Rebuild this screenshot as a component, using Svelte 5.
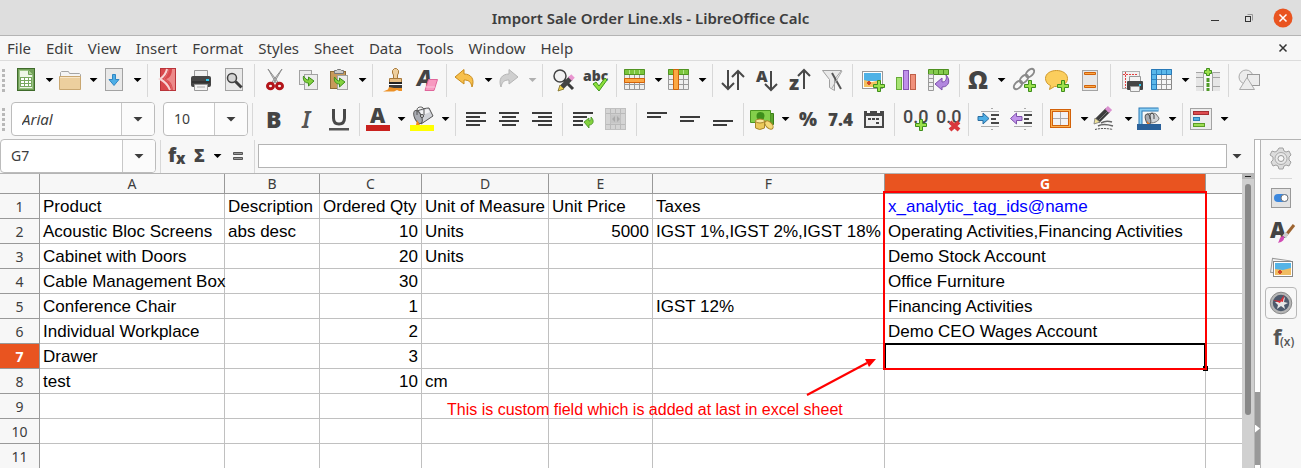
<script>
  const menus = ['File', 'Edit', 'View', 'Insert', 'Format', 'Styles', 'Sheet', 'Data', 'Tools', 'Window', 'Help'];

  const plus = (x, y) =>
    `<path d="M${x + 4} ${y}h3v4h4v3h-4v4h-3v-4h-4v-3h4z" transform="translate(-.5 .5)" fill="#9be04b" stroke="#3f8f1c"/>`;
  const bars = (rows) =>
    rows.map(([x, y, w]) => `<rect x="${x}" y="${y}" width="${w}" height="2" fill="#3b3b3b"/>`).join('');
  const glyph = (t, x, y, size, extra = '') =>
    `<text x="${x}" y="${y}" font-family="Open Sans, Noto Sans, sans-serif" font-weight="800" font-size="${size}" fill="#444" ${extra}>${t}</text>`;
  const zeros = '<text x="1" y="16" font-family="Roboto, sans-serif" font-weight="500" font-size="18" fill="#484848">0.0</text>';
  const gridLines = '<path d="M.5 6.500h20M.5 11.500h20M.5 16.500h20M5.500 1v20M10.500 1v20M15.500 1v20" stroke="#999" fill="none"/>';
  const page = (x, y, w, h) =>
    `<rect x="${x}.5" y="${y}.5" width="${w}" height="${h}" fill="#ececec" stroke="#a2a2a2"/>`;

  const icons = {
    sheet: `<rect x="2.500" y=".5" width="17" height="22" fill="#71a057" stroke="#3f6b2b"/><path d="M4.500 2.500h9l4 4v14h-13z" fill="#eef6e8" stroke="#9cc487"/><path d="M13.500 2.500v4h4" fill="#a9d18e" stroke="#6f9f58"/><path d="M5 9h12v10H5z" fill="#78a85f"/><path d="M6 10h3v2H6zM10 10h3v2h-3zM14 10h2v2h-2zM6 13h3v2H6zM10 13h3v2h-3zM14 13h2v2h-2zM6 16h3v2H6zM10 16h3v2h-3zM14 16h2v2h-2z" fill="#fff"/>`,
    folder: `<path d="M1.500 9V4.500l1-1h7l1 2h10l1 1V10" fill="#f4f4f4" stroke="#a5a5a5"/><path d="M.5 8.500h21v13H.5z" fill="#eccf9e" stroke="#c9a771"/><path d="M1 9.500h20" stroke="#f8e6c8"/>`,
    save: `<rect x="2.500" y=".5" width="17" height="22" fill="#e9e9e9" stroke="#a3a3a3"/><path d="M9.500 6.500h3v5h3.500l-5 6-5-6h3.500z" fill="#4daee6" stroke="#2f86c4"/>`,
    pdf: `<rect x="5.500" y=".5" width="15" height="22" fill="#d9484c" stroke="#b9343a"/><path d="M12 1C11 6 8 9 5 11c4 2 8 6 10 11" fill="none" stroke="#f7d4d4" stroke-width="2"/><path d="M14 1c-1 4-3 8-5 10 4 2 7 4 8 11" fill="none" stroke="#e06a6c"/><path d="M17 1h3v21h-2c-1-8-4-9-7-11 4-1 6-5 6-10z" fill="#ec8a8a"/>`,
    print: `<path d="M6.500 9V2.500h13V9" fill="#f0f0f0" stroke="#999"/><rect x="3" y="8" width="20" height="11" rx="2" fill="#454545"/><path d="M4 14h18" stroke="#222"/><rect x="18" y="11" width="3" height="2" fill="#27c9f2"/><path d="M6.500 16.500h13v6h-13z" fill="#f3f3f3" stroke="#999"/><path d="M9 19h8" stroke="#aaa"/>`,
    preview: `<rect x="4.500" y=".5" width="17" height="22" fill="#e9e9e9" stroke="#a3a3a3"/><circle cx="11" cy="10" r="4.500" fill="#d5d5d5" stroke="#444" stroke-width="1.500"/><path d="M14.500 13.500l6 6" stroke="#3d3d3d" stroke-width="3"/>`,
    cut: `<path d="M6 1l8 14 2-1z M20 1l-8 14-2-1z" fill="#dedede" stroke="#909090"/><g fill="none" stroke="#b3151a" stroke-width="3"><ellipse cx="8.500" cy="18" rx="3" ry="2.800"/><ellipse cx="17.500" cy="18" rx="3" ry="2.800"/></g>`,
    copy: `${page(4, 2, 12, 14)}${page(9, 6, 13, 15)}<path d="M8.500 8c-1 5 2 7 5 7v3l5.500-5-5.500-4v3c-2 0-3-1-5-4z" fill="#83d13f" stroke="#3f8f1c"/>`,
    paste: `<rect x="2.500" y="3.500" width="15" height="17" fill="#c89a5b" stroke="#8c6b38"/><path d="M6.500 5.500v-3h2l1-1h3l1 1h2v3z" fill="#ccc" stroke="#777"/>${page(9, 7, 10, 14)}<path d="M6.500 9c-1 5 2 7 5 7v3l5.500-5-5.500-4v3c-2 0-3-1-5-4z" fill="#83d13f" stroke="#3f8f1c"/>`,
    brush: `<path d="M13.500 11V7l-1-2V2.500l2-2h2l2 2V5l-1 2v4" fill="#efcf9d" stroke="#a87a3c"/><path d="M9.500 10.500h12v4h-12z" fill="#e8bf85" stroke="#a87a3c"/><path d="M9 14h13v2H9z" fill="#222"/><path d="M9 16h13v1H9z" fill="#fff"/><path d="M9 17h13v3H9z" fill="#3b3b3b"/><path d="M9 19l5 1h8v3h-3l-2-1-3 1.500H3l5-2z" fill="#ed9126"/>`,
    clear: `${glyph('A', 4, 18, 22, 'font-style="italic"')}<path d="M15.500 11.500h9l-3.500 11h-9z" fill="#f79ac0" stroke="#e0669b"/><path d="M13 19h9" stroke="#fbc5dc"/>`,
    undo: `<path d="M1 9L10 1.500V6c7 0 11 5 8 13-1-5-3-7-8-7v4z" fill="#f7c04d" stroke="#c98b1b"/>`,
    redo: `<path d="M20 9L11 1.500V6C4 6 0 11 3 19c1-5 3-7 8-7v4z" fill="#cfcfcf" stroke="#b5b5b5"/>`,
    find: `<circle cx="10" cy="8" r="6" fill="#f2f2f2" stroke="#444" stroke-width="1.500"/><path d="M14 12l9 9" stroke="#3b3b3b" stroke-width="3"/><path d="M12 19l9-9" stroke="#444" stroke-width="5"/><path d="M20 11l3-3" stroke="#e995d0" stroke-width="5"/><path d="M8 23l2-6 4 4z" fill="#edd04c" stroke="#7a6b28" stroke-width=".8"/>`,
    abc: `${glyph('abc', 0, 13, 14)}<path d="M10 16l3-2 3 4 6-8 2 2-8 11z" fill="#8ee03c" stroke="#3f981d"/>`,
    rows: `<path d="M.5 1.500h20v20H.5z" fill="#efefef" stroke="#999"/>${gridLines}<path d="M.5 1.500h20v5H.5z" fill="#7cc53e" stroke="#519422"/><path d="M5.500 2v4M10.500 2v4M15.500 2v4" stroke="#b4e58c"/><path d="M.5 10.500h20v4H.5z" fill="#fba845" stroke="#d2620a"/>`,
    cols: `<path d="M.5 1.500h20v20H.5z" fill="#efefef" stroke="#999"/>${gridLines}<path d="M.5 1.500h20v5H.5z" fill="#7cc53e" stroke="#519422"/><path d="M5.500 2v4M15.500 2v4" stroke="#b4e58c"/><path d="M5.500 1.500h5v20h-5z" fill="#fba845" stroke="#d2620a"/>`,
    sort: `<path d="M8 2v19M2 15l6 6 6-6M18 22V3M12 9l6-6 6 6" fill="none" stroke="#484848" stroke-width="2"/>`,
    asc: `${glyph('A', 3, 14, 16)}<path d="M18 3v19M12 16l6 6 6-6" fill="none" stroke="#484848" stroke-width="2"/>`,
    desc: `${glyph('z', 3, 22, 20)}<path d="M18 21V2M12 8l6-6 6 6" fill="none" stroke="#484848" stroke-width="2"/>`,
    filter: `<path d="M3.500 2.500h19l-7 9v11l-5-3v-8z" fill="#e9e9e9" stroke="#a0a0a0"/><path d="M13 5l9 16" stroke="#555" stroke-width="2"/><path d="M23 3L13 20" stroke="#aaa"/>`,
    image: `<rect x="2.500" y="3.500" width="20" height="17" fill="#fff" stroke="#999"/><path d="M4 5h17v8H4z" fill="#4fb2e6"/><path d="M4 12l8 2 9-2v7H4z" fill="#f4c160"/><path d="M7 15h4M9 13v4" stroke="#d24726" stroke-width="2"/>${plus(14, 12)}`,
    chart: `<rect x="3.500" y="9.500" width="5" height="12" fill="#a6e372" stroke="#67ac37"/><rect x="10.500" y="2.500" width="5" height="19" fill="#bf90ea" stroke="#8555b3"/><rect x="17.500" y="6.500" width="5" height="15" fill="#f0917b" stroke="#c06049"/>`,
    pivot: `<path d="M2.500 1.500h20v5h-20z" fill="#85cb4e" stroke="#4e9020"/><path d="M7.500 2v4M12.500 2v4M17.500 2v4" stroke="#4e9020"/><path d="M2.500 6.500h5v16h-5zM2.500 10.500h5M2.500 14.500h5M2.500 18.500h5" fill="#eee" stroke="#999"/><path d="M9 16l7-6v4c4 0 5-3 4-7 5 5 3 12-4 12v3z" fill="#b287df" stroke="#7e50ab"/>`,
    omega: `${glyph('Ω', 1, 21, 25)}`,
    link: `<g fill="none" stroke="#8a8a8a" stroke-width="2"><ellipse cx="19" cy="5" rx="5" ry="3" transform="rotate(-45 19 5)"/><ellipse cx="13" cy="11" rx="5" ry="3" transform="rotate(-45 13 11)"/><ellipse cx="7" cy="17" rx="5" ry="3" transform="rotate(-45 7 17)"/></g>${plus(14, 12)}`,
    comment: `<path d="M12.500 2.500c6 0 11 3 11 8s-5 8-11 8l-2 0-5 3 1-4c-3-1-5-4-5-7 0-5 5-8 11-8z" fill="#fbce5d" stroke="#cf982a"/>${plus(14, 12)}`,
    header: `<rect x="5.500" y="2.500" width="15" height="20" fill="#e7e7e7" stroke="#a3a3a3"/><path d="M7.500 4.500h11v2h-11zM7.500 17.500h11v2h-11z" fill="#fba845" stroke="#d2620a"/>`,
    area: `<rect x="4.500" y="3.500" width="17" height="17" fill="#f1f1f1" stroke="#b0b0b0"/><path d="M5 6.500h15M7.500 4v16" stroke="#e34040" stroke-dasharray="2 1"/><path d="M11.500 15V8.500h11V15" fill="#f3f3f3" stroke="#999"/><rect x="9" y="13" width="16" height="9" rx="1" fill="#454545"/><rect x="21" y="16" width="2" height="2" fill="#27c9f2"/><path d="M12.500 18.500h9v5h-9z" fill="#f3f3f3" stroke="#999"/>`,
    freeze: `<path d="M.5 1.500h20v20H.5z" fill="#f5f5f5" stroke="#888"/>${gridLines}<path d="M.5 1.500h20v5h-15v15h-5z" fill="#5bb8ea" stroke="#2779b8"/><path d="M5.500 2v4M10.500 2v4M15.500 2v4M1 6.500h4M1 11.500h4M1 16.500h4" stroke="#2f86c4"/>`,
    split: `<path d="M1 5h7v4H1zM18 5h7v4h-7zM1 9h7v6H1zM18 9h7v6h-7zM1 15h7v8H1zM18 15h7v8h-7z" fill="#e6e6e6"/><path d="M1 4.500h7.500V23M25 4.500h-7.500V23M1 9.500h7M1 18.500h7M18 9.500h7M18 18.500h7" fill="none" stroke="#a4a4a4"/><path d="M13 10v13" stroke="#4f9a27" stroke-width="3" stroke-dasharray="4 1"/><path d="M11.500.5h3v2h2v3h-2v2h-3v-2h-2v-3h2z" fill="#9be04b" stroke="#3f8f1c"/>`,
    shapes: `<circle cx="10" cy="9" r="7" fill="#ececec" stroke="#aaa"/><rect x="11.500" y="6.500" width="12" height="11" fill="#ececec" stroke="#999"/><path d="M3.500 21.500l7.500-12 7.500 12z" fill="#ececec" stroke="#aaa"/>`,

    bold: `${glyph('B', 6, 21, 23)}`,
    italic: `<text x="9" y="21" font-family="Noto Sans, sans-serif" font-style="italic" font-weight="600" font-size="23" fill="#555">I</text>`,
    underline: `<path d="M7.500 2v9q0 6 5.500 6t5.500-6V2" fill="none" stroke="#484848" stroke-width="3"/><rect x="3" y="21" width="20" height="2.500" fill="#555"/>`,
    fontcolor: `${glyph('A', 3, 16, 21)}<rect x="-1" y="18" width="24" height="6" fill="#c9211e"/>`,
    fill: `<path d="M6 4c5-2 9-3 12-3l4 8-12 8z" fill="#d0d2d7" stroke="#555"/><path d="M9 4l8-2 2 3-9 4z" fill="#f3f3f5"/><ellipse cx="7" cy="10" rx="3.500" ry="7" transform="rotate(-25 7 10)" fill="#a9acb3" stroke="#555"/><path d="M6 8V3c0-4 7-4 7 0v5" fill="none" stroke="#555"/><circle cx="11" cy="9" r="1.500" fill="#eee" stroke="#444"/><path d="M6 13l3 5H5z" fill="#ef8a1c"/><rect x="-1" y="18" width="24" height="6" fill="#ff0"/>`,
    left: bars([[3, 5, 20], [3, 9, 14], [3, 13, 20], [3, 17, 14]]),
    center: bars([[3, 5, 20], [6, 9, 14], [3, 13, 20], [6, 17, 14]]),
    right: bars([[3, 5, 20], [9, 9, 14], [3, 13, 20], [9, 17, 14]]),
    wrap: `${bars([[3, 5, 20], [3, 9, 14], [3, 13, 10], [3, 17, 10]])}<path d="M14 15l5-4v3c2 0 2-2 2-4 4 4 2 8-2 8v3z" fill="#83d13f" stroke="#3f8f1c" stroke-width=".8"/>`,
    merge: `<rect x="2.500" y="1.500" width="20" height="21" fill="#d4d4d4" stroke="#c0c0c0"/><path d="M3 6.500h19M3 17.500h19M7.500 2v20M12.500 2v5M12.500 18v4M17.500 2v20" stroke="#bababa"/><rect x="7.500" y="7.500" width="10" height="9" fill="#c6c6c6"/><path d="M12 9v6l-3-3zM14 9v6l3-3z" fill="#aaa"/>`,
    vtop: bars([[3, 5, 20], [3, 9, 14]]),
    vmid: bars([[3, 9, 20], [3, 13, 14]]),
    vbot: bars([[3, 13, 20], [3, 17, 14]]),
    money: `<path d="M4.500 6.500h18v11h-18z" fill="#5ba52e" stroke="#3c7d18"/><path d="M-.5 3.500h20v12h-20z" fill="#84cf4b" stroke="#4c9722"/><circle cx="9.500" cy="9" r="4" fill="#3e8f1b"/><path d="M4.500 14v7q4 3 9 0v-7" fill="#ecc95a" stroke="#a8852a"/><ellipse cx="9" cy="14" rx="4.500" ry="2" fill="#f9e7a0" stroke="#a8852a"/><ellipse cx="18" cy="18" rx="5" ry="3" transform="rotate(45 18 18)" fill="#f5d977" stroke="#a8852a"/>`,
    percent: glyph('%', 4, 19, 19),
    number: glyph('7.4', 0, 19, 17),
    date: `<path d="M3 4h3v2h3V4h7v2h3V4h4v17H3z" fill="#484848"/><path d="M5 9h16v10H5z" fill="#f0f0f0"/><path d="M7 11h3v2H7zM11 11h3v2h-3zM15 11h3v2h-3zM15 15h3v2h-3z" fill="#484848"/>`,
    addzero: `${zeros}${plus(14, 12)}`,
    delzero: `${zeros}<path d="M15 15l9 8M24 15l-9 8" stroke="#d9373c" stroke-width="4"/>`,
    indent: `<path d="M5 4.500h18M5 19.500h18M15 1.500h2M15 22.500h2" stroke="#aaa"/><path d="M15 8h8M15 12h5M15 16h8" stroke="#484848" stroke-width="2"/><path d="M2 9.500h5V6l6 5.500-6 5.500v-3.500H2z" fill="#4daee6" stroke="#2b6da0"/>`,
    outdent: `<path d="M5 4.500h18M5 19.500h18M15 1.500h2M15 22.500h2" stroke="#aaa"/><path d="M15 8h8M15 12h5M15 16h8" stroke="#484848" stroke-width="2"/><path d="M13 9.500H7.500V6L1.500 11.500l6 5.500v-3.500H13z" fill="#c193ea" stroke="#7e50ab"/>`,
    borders: `<rect x="1.500" y="3.500" width="18" height="16" fill="#f2f2f2" stroke="#d2620a" stroke-width="3"/><rect x="1.500" y="3.500" width="18" height="16" fill="none" stroke="#fbb14f"/><path d="M10.500 5v13M3 11.500h15" stroke="#aaa"/>`,
    linestyle: `<path d="M3 14L14 3" stroke="#3c3c3c" stroke-width="6"/><path d="M5 13L14 4" stroke="#777"/><path d="M13 4l3-3" stroke="#db91d0" stroke-width="6"/><path d="M0 17l1-6 5 4z" fill="#efe39b" stroke="#777" stroke-width=".8"/><path d="M7 16q5-3 11-1M4 19q5-3 15 0" fill="none" stroke="#666" stroke-width="1.500"/><path d="M1 22.500q8-2 18 0" fill="none" stroke="#444" stroke-dasharray="2 1"/>`,
    bordercolor: `<path d="M2.500 17V2.500h18" fill="none" stroke="#2878b4" stroke-width="4"/><path d="M2.500 17V2.500h18" fill="none" stroke="#8bd0f5" stroke-width="2"/><path d="M9 7c4-1 8-1 9 0l3 4c0 3-4 5-9 5z" fill="#d2d4d8" stroke="#777"/><ellipse cx="10" cy="12" rx="2.500" ry="5" transform="rotate(-15 10 12)" fill="#a6a9af" stroke="#555"/><path d="M12 12V8q2-4 4 0v4" fill="none" stroke="#444"/><path d="M9 14l3 3H9z" fill="#d8762a"/><rect x="-1" y="17" width="24" height="6" fill="#2a6099"/>`,
    condition: `<rect x=".5" y="1.500" width="21" height="21" fill="#ececec" stroke="#a3a3a3"/><rect x="3.500" y="4.500" width="15" height="3" fill="#dd4b4e" stroke="#a32c30"/><rect x="3.500" y="10.500" width="6" height="3" fill="#53aee0" stroke="#2b7db3"/><rect x="3.500" y="16.500" width="11" height="3" fill="#9bdc51" stroke="#5a9c25"/>`,

    gear: `<path d="M10 1h4l1 3 2 1 3-1 2 4-2 2v3l2 2-2 4-3-1-2 1-1 3h-4l-1-3-2-1-3 1-2-4 2-2v-3L1 8l2-4 3 1 2-1z" fill="#dcdcdc" stroke="#a0a0a0"/><circle cx="12" cy="11.500" r="6" fill="#e8e8e8" stroke="#aaa"/><circle cx="12" cy="11.500" r="3" fill="#f7f7f7" stroke="#999"/>`,
    properties: `<rect x="2.500" y="2.500" width="19" height="19" fill="#e3e3e3" stroke="#999"/><rect x="5" y="8" width="14" height="8" rx="4" fill="#3b87dd"/><circle cx="15.500" cy="12" r="3.500" fill="#fff" stroke="#777"/>`,
    styles: `${glyph('A', 1, 17, 22)}<path d="M25 4l-8 10" stroke="#9d6430" stroke-width="3"/><path d="M18 12l-3 4" stroke="#ccc" stroke-width="4"/><path d="M15 15c1 5-3 6-6 7 2-3 1-7 6-7z" fill="#d14bb4"/>`,
    gallery: `<rect x="2.500" y="3.500" width="18" height="14" transform="rotate(8 11 10)" fill="#f4f4f4" stroke="#999"/><rect x="4.500" y="5.500" width="19" height="15" fill="#fff" stroke="#888"/><path d="M6 7h16v7H6z" fill="#55b4e6"/><path d="M6 13l8 1 8-2v7H6z" fill="#f0bd62"/><path d="M9 16h4M11 14v4" stroke="#d24726" stroke-width="2"/>`,
    navigator: `<circle cx="12" cy="12" r="9.500" fill="#4e5a6c" stroke="#b5b5b5" stroke-width="2.500"/><circle cx="12" cy="12" r="10.800" fill="none" stroke="#777" stroke-width=".8"/><path d="M11 11l5-5-1 5 4 1-4 2 1 4-4-3-4 3 1-4-3-3z" fill="#e8e8e8"/><path d="M15 4l-1 7-3-1zM4 9l8 1-1 2z" fill="#dd2c35"/>`,
    functions: `<text x="4" y="19" font-family="Open Sans, sans-serif" font-weight="700" font-size="22" fill="#555">f</text><text x="11" y="20" font-family="Open Sans, sans-serif" font-weight="600" font-size="12" fill="#555">(x)</text>`,
    fx: `${glyph('f', 4, 18, 20)}${glyph('x', 12, 20, 15)}`,
    sum: glyph('Σ', 6, 18, 18),
    equals: `<path d="M7.500 8.500h9v2h-9zM7.500 13.500h9v2h-9z" fill="#999" stroke="#555"/>`
  };

  // A trailing "+" marks an icon that carries a drop-down arrow.
  const standard = [
    ['sheet+', 'folder+', 'save+'], ['pdf', 'print', 'preview'], ['cut', 'copy', 'paste+'],
    ['brush', 'clear'], ['undo+', 'redo+'], ['find', 'abc'], ['rows+', 'cols+'],
    ['sort', 'asc', 'desc', 'filter'], ['image', 'chart', 'pivot'],
    ['omega+', 'link', 'comment', 'header'], ['area', 'freeze+', 'split'], ['shapes']
  ];
  const formatting = [
    ['bold', 'italic', 'underline'], ['fontcolor+', 'fill+'], ['left', 'center', 'right'],
    ['wrap', 'merge'], ['vtop', 'vmid', 'vbot'], ['money+', 'percent', 'number', 'date'],
    ['addzero', 'delzero'], ['indent', 'outdent'], ['borders+', 'linestyle+', 'bordercolor+'], ['condition+']
  ];
  const panels = ['properties', 'styles', 'gallery', 'navigator', 'functions'];

  const columns = ['A', 'B', 'C', 'D', 'E', 'F', 'G'];
  const rows = [
    ['Product', 'Description', 'Ordered Qty', 'Unit of Measure', 'Unit Price', 'Taxes', 'x_analytic_tag_ids@name'],
    ['Acoustic Bloc Screens', 'abs desc', 10, 'Units', 5000, 'IGST 1%,IGST 2%,IGST 18%', 'Operating Activities,Financing Activities'],
    ['Cabinet with Doors', '', 20, 'Units', '', '', 'Demo Stock Account'],
    ['Cable Management Box', '', 30, '', '', '', 'Office Furniture'],
    ['Conference Chair', '', 1, '', '', 'IGST 12%', 'Financing Activities'],
    ['Individual Workplace', '', 2, '', '', '', 'Demo CEO Wages Account'],
    ['Drawer', '', 3, '', '', '', ''],
    ['test', '', 10, 'cm', '', '', ''],
    ['', '', '', '', '', '', ''],
    ['', '', '', '', '', '', ''],
    ['', '', '', '', '', '', '']
  ];

  let fontName = $state('Arial');
  let fontSize = $state('10');
  let cellRef = $state('G7');
  let formula = $state('');
</script>

{#snippet icon(name)}
  <svg class="icon" width="24" height="24" viewBox="0 0 24 24" aria-hidden="true">{@html icons[name]}</svg>
{/snippet}

{#snippet groups(list)}
  {#each list as group, g}
    {#if g > 0}<span class="sep"></span>{/if}
    {#each group as item}
      {@const name = item.replace('+', '')}
      <button class="tool" aria-label={name}>{@render icon(name)}</button>
      {#if item.endsWith('+')}
        <button class="drop" class:dim={name === 'redo'} aria-label="{name} options"></button>
      {/if}
    {/each}
  {/each}
{/snippet}

<div class="app">
  <header class="title">
    <h1>Import Sale Order Line.xls - LibreOffice Calc</h1>
    <div class="controls">
      <button aria-label="Minimize"><svg width="20" height="20"><path d="M6 12.500h8" stroke="#333" /></svg></button>
      <button aria-label="Restore"><svg width="20" height="20"><path d="M8.500 6.500h5v6" fill="none" stroke="#999" /><rect x="6.500" y="8.500" width="5" height="5" fill="none" stroke="#333" /></svg></button>
      <button aria-label="Close"><svg width="20" height="20"><circle cx="10" cy="10" r="9.500" fill="#e95420" /><path d="M6.500 6.500l7 7M13.500 6.500l-7 7" stroke="#fff" stroke-width="1.500" /></svg></button>
    </div>
  </header>

  <nav class="menu">
    {#each menus as m}<button>{m}</button>{/each}
    <button class="shut" aria-label="Close document"><svg width="20" height="20"><path d="M6.500 6.500l7 7M13.500 6.500l-7 7" stroke="#333" stroke-width="1.500" /></svg></button>
  </nav>

  <div class="bar">
    <span class="grip"></span>
    {@render groups(standard)}
  </div>

  <div class="bar second">
    <span class="grip"></span>
    <div class="combo font">
      <input aria-label="Font name" bind:value={fontName} /><button aria-label="Choose font"></button>
    </div>
    <div class="combo size">
      <input aria-label="Font size" bind:value={fontSize} /><button aria-label="Choose size"></button>
    </div>
    <span class="sep"></span>
    {@render groups(formatting)}
  </div>

  <div class="work">
    <main>
      <div class="formula">
        <div class="combo name">
          <input aria-label="Cell reference" bind:value={cellRef} /><button aria-label="Choose range"></button>
        </div>
        <span class="sep"></span>
        <button class="fn" aria-label="Function wizard">{@render icon('fx')}</button>
        <button class="fn" aria-label="Sum">{@render icon('sum')}</button>
        <button class="drop" aria-label="Sum options"></button>
        <button class="fn eq" aria-label="Formula">{@render icon('equals')}</button>
        <span class="sep"></span>
        <input class="line" aria-label="Formula text" bind:value={formula} />
        <button class="expand" aria-label="Expand formula bar"></button>
      </div>

      <div class="view">
        <div class="cells">
          <table>
            <colgroup>
              <col class="n" /><col class="a" /><col class="b" /><col class="c" /><col class="d" /><col class="e" /><col class="f" /><col class="g" /><col />
            </colgroup>
            <thead>
              <tr>
                <th></th>
                {#each columns as c}<th scope="col" class:on={c === 'G'}>{c}</th>{/each}
                <th class="rest"></th>
              </tr>
            </thead>
            <tbody>
              {#each rows as row, r}
                <tr>
                  <th scope="row" class:on={r === 6}>{r + 1}</th>
                  {#each row as value, c}
                    <td class:num={typeof value === 'number'} class:link={r === 0 && c === 6}>{value}</td>
                  {/each}
                  <td class="rest"></td>
                </tr>
              {/each}
            </tbody>
          </table>
          <div class="cursor"></div>
          <div class="frame"></div>
          <p class="note">This is custom field which is added at last in excel sheet</p>
          <svg class="arrow" width="72" height="40" aria-hidden="true">
            <path d="M2 37L62 5" stroke="#f00" stroke-width="2" /><path d="M71 1L60 1l4 8z" fill="#f00" />
          </svg>
        </div>
        <div class="scroll"><span class="splitter"></span><span class="thumb"></span></div>
      </div>
    </main>

    <div class="edge"><button aria-label="Hide sidebar"></button></div>
    <aside>
      <button aria-label="Sidebar settings">{@render icon('gear')}</button>
      <hr />
      {#each panels as p}
        <button class:active={p === 'navigator'} aria-label={p}>{@render icon(p)}</button>
      {/each}
    </aside>
  </div>
</div>

<style>
  :global(body) { margin: 0; }
  * { box-sizing: border-box; }
  .app {
    display: flex; flex-direction: column; height: 100vh; overflow: hidden;
    background: #f7f7f7; color: #3d3d3d; font: 14px/20px "Noto Sans", "Open Sans", sans-serif;
  }
  button { border: 0; padding: 0; margin: 0; background: none; font: inherit; color: inherit; }
  input { border: 0; outline: 0; margin: 0; background: none; font: inherit; color: inherit; min-width: 0; }
  svg { display: block; }
  .icon { overflow: visible; }

  .title {
    display: grid; grid-template-columns: 1fr auto 1fr; align-items: center; flex: none;
    height: 36px; background: #dedede; border-bottom: 1px solid #b4b4b4;
  }
  h1 { grid-column: 2; margin: 0; font-size: 15px; line-height: 20px; font-weight: 600; }
  .controls { display: flex; justify-content: flex-end; gap: 14px; padding-right: 8px; }

  .menu { display: flex; align-items: center; gap: 15px; flex: none; height: 25px; padding: 0 8px 0 7px; border-bottom: 1px solid #dcdcdc; font-size: 15px; }
  .shut { margin-left: auto; }

  .bar { display: flex; align-items: center; flex: none; height: 38px; }
  .second { height: 40px; }
  .grip { flex: none; width: 3px; height: 23px; margin: 0 6px 0 2px; background: repeating-linear-gradient(#b8b8b8 0 3px, transparent 3px 5px); }
  .sep { flex: none; width: 1px; height: 33px; margin: 0 3px 0 4px; background: #d8d8d8; }
  .tool { flex: none; width: 33px; padding: 0 5px 0 4px; }
  .drop { flex: none; width: 11px; height: 24px; }
  .drop::before, .combo button::before, .expand::before {
    content: ""; display: block; margin: auto; width: 8px; height: 4px; background: #000;
    clip-path: polygon(0 0, 100% 0, 50% 100%);
  }
  .drop.dim::before { background: #b0b0b0; }

  .combo { display: flex; flex: none; height: 34px; border: 1px solid #bcbcbc; border-radius: 4px; background: #fff; overflow: hidden; }
  .combo input { flex: 1; padding: 0 10px; }
  .combo button { flex: none; width: 33px; border-left: 1px solid #c8c8c8; background: #fbfbfb; }
  .combo button::before, .expand::before { width: 10px; height: 5px; background: #3d3d3d; }
  .font { width: 144px; margin-right: 8px; }
  .font input { font-size: 15px; font-style: italic; }
  .size { width: 85px; }

  .work { display: flex; flex: 1; min-height: 0; }
  main { display: flex; flex-direction: column; flex: 1; min-width: 0; }
  .formula { display: flex; align-items: center; flex: none; height: 35px; border-bottom: 1px solid #b4b4b4; }
  .name { width: 156px; }
  .fn { flex: none; width: 24px; }
  .eq { margin: 0 0 0 3px; }
  .line { flex: 1; height: 24px; padding: 0 6px; border: 1px solid #b4b4b4; background: #fff; }
  .expand { flex: none; width: 20px; margin-right: 7px; }

  .view { display: flex; flex: 1; min-height: 0; overflow: hidden; }
  .cells { position: relative; flex: 1; min-width: 0; overflow: hidden; background: #fff; }
  table { width: 100%; table-layout: fixed; border-collapse: separate; border-spacing: 0; color: #000; }
  .n { width: 40px; } .a { width: 185px; } .b { width: 95px; } .c { width: 102px; }
  .d { width: 127px; } .e { width: 104px; } .f { width: 232px; } .g { width: 321px; }
  td, th { padding: 0 3px; height: 25px; border: 0 solid #c0c0c0; border-width: 0 1px 1px 0; white-space: nowrap; }
  td { padding-top: 2px; font: 17px/22px "Liberation Sans", Arial, sans-serif; text-align: left; }
  th { font-weight: 400; line-height: 19px; color: #3d3d3d; background: #f7f7f7; border-color: #999; }
  thead th { height: 20px; }
  th.on { background: #e95420; color: #fff; font-weight: 700; }
  .rest { border-right: 0; }
  .num { text-align: right; }
  .link { color: #0000ff; }

  .cursor { position: absolute; left: 884px; top: 169px; width: 322px; height: 27px; border: 2px solid #000; }
  .cursor::after { content: ""; position: absolute; right: -4px; bottom: -3px; width: 5px; height: 5px; background: #000; }
  .frame { position: absolute; left: 883px; top: 17px; width: 324px; height: 179px; border: 2px solid #f00; }
  .note { position: absolute; left: 447px; top: 226px; margin: 0; color: #f00; font: 16px/20px "Liberation Sans", Arial, sans-serif; white-space: nowrap; }
  .arrow { position: absolute; left: 805px; top: 184px; }

  .scroll { display: flex; flex-direction: column; align-items: center; flex: none; width: 12px; background: #d0d0d0; }
  .splitter { width: 12px; height: 5px; background: linear-gradient(#222, #222) center / 6px 1px no-repeat #b8b8b8; }
  .thumb { width: 6px; height: 231px; margin-top: 5px; border-radius: 3px; background: #888; }

  .edge { display: flex; align-items: flex-end; flex: none; width: 7px; padding-bottom: 3px; background: #fff; border: 1px solid #b4b4b4; border-bottom: 0; }
  .edge button { display: flex; align-items: center; width: 5px; height: 73px; background: #999; }
  .edge button::before { content: ""; width: 5px; height: 8px; background: #fff; clip-path: polygon(0 0, 100% 50%, 0 100%); }
  aside { display: flex; flex-direction: column; align-items: center; gap: 3px; flex: none; width: 40px; padding-top: 3px; border-top: 1px solid #b4b4b4; }
  aside button { display: grid; place-items: center; width: 32px; height: 32px; border: 1px solid transparent; border-radius: 4px; }
  aside .active { border-color: #b8b8b8; }
  hr { width: 22px; margin: 0; border: 0; border-top: 1px solid #d8d8d8; }
</style>
